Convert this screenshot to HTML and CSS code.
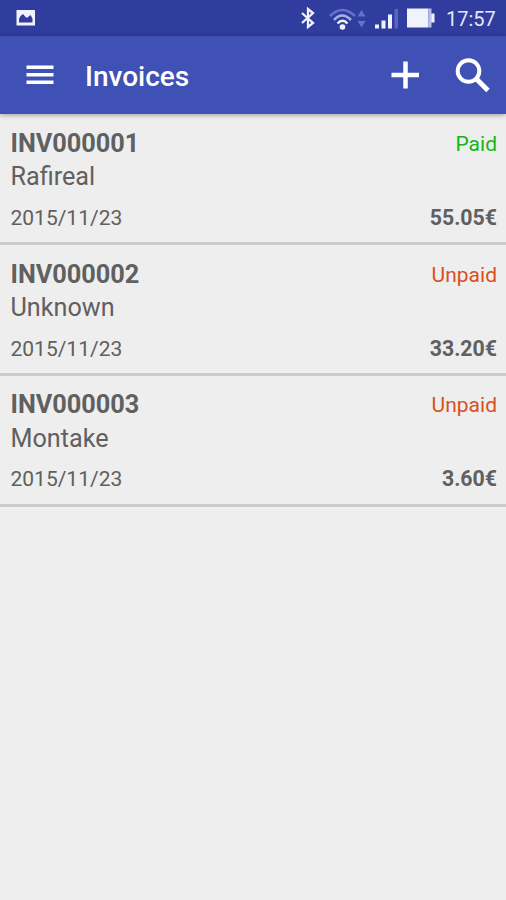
FILE: index.html
```
<!DOCTYPE html>
<html lang="en">
<head>
  <meta charset="UTF-8" />
  <meta name="viewport" content="width=device-width, initial-scale=1.0" />
  <title>Invoices</title>
  <link rel="stylesheet" href="styles.css">
</head>
<body>
  <!-- status bar -->
  <div class="status-bar">
    <svg class="picture-icon" width="20" height="16" viewBox="0 0 20 16">
      <path fill="#f0f2fc" fill-rule="evenodd" d="M.5 0H19v15.500H.5zM3 12.500h13.500V8.500L14.500 5 11.500 7.500H10L7 4 4.500 6 3 9z"/>
    </svg>
    <div class="status-icons">
      <svg width="16" height="22" viewBox="0 0 16 22" fill="none" stroke="#f0f2fc" stroke-width="2.300">
        <path d="M2 6l11 10-5 4V2l5 4L2 16"/>
      </svg>
      <svg class="wifi" width="37" height="23" viewBox="0 0 37 23" fill="none" stroke-width="2.500">
        <path stroke="#6672c9" d="M1 9Q13-3 26 9"/>
        <path stroke="#a9b1e3" d="M5 13Q13 4 22 13"/>
        <path stroke="#f0f2fc" d="M8.500 16.500Q13.500 11 18.500 16.500"/>
        <circle cx="13.500" cy="20" r="2.800" fill="#f0f2fc"/>
        <path fill="#6672c9" d="M28.500 9.500l4-6.500 4 6.500zM28.500 14h8l-4 6.500z"/>
      </svg>
      <svg class="signal" width="24" height="21" viewBox="0 0 24 21" fill="#f0f2fc">
        <path d="M0 16.500h4V20.500H0zM6.500 12.500h4v8h-4zM13 6.500h4v14h-4z"/>
        <path fill="#5865c2" d="M19.500 1H23v19.500h-3.500z"/>
      </svg>
      <svg class="battery" width="28" height="20" viewBox="0 0 28 20">
        <path fill="#f0f2fc" d="M0 .5h21.500V19.500H0zM24 5.500h3.500v9H24z"/>
        <path fill="#b7bde6" d="M21.500.5H24.500v19h-3z"/>
      </svg>
      <span class="clock">17:57</span>
    </div>
  </div>

  <!-- toolbar -->
  <header class="toolbar">
    <svg width="28" height="20" viewBox="0 0 28 20" fill="#fff">
      <path d="M.5.5h27V4H.5zM.5 8h27v3.500H.5zM.5 15.500h27V19H.5z"/>
    </svg>
    <h1>Invoices</h1>
    <svg class="add-icon" width="28" height="28" viewBox="0 0 28 28" stroke="#fff" stroke-width="4.500">
      <path d="M14.500.5v27M.5 14h27.500"/>
    </svg>
    <svg class="search-icon" width="35" height="35" viewBox="0 0 35 35" fill="none" stroke="#fff" stroke-width="4">
      <circle cx="13.500" cy="13" r="10.800"/>
      <path stroke-width="5" d="M21.500 21L33 32.500"/>
    </svg>
  </header>

  <!-- invoice list -->
  <main class="invoices">
    <article class="invoice">
      <div class="line"><h2>INV000001</h2><span class="status paid">Paid</span></div>
      <p class="customer">Rafireal</p>
      <div class="line details"><time>2015/11/23</time><strong>55.05€</strong></div>
    </article>
    <article class="invoice">
      <div class="line"><h2>INV000002</h2><span class="status unpaid">Unpaid</span></div>
      <p class="customer">Unknown</p>
      <div class="line details"><time>2015/11/23</time><strong>33.20€</strong></div>
    </article>
    <article class="invoice">
      <div class="line"><h2>INV000003</h2><span class="status unpaid">Unpaid</span></div>
      <p class="customer">Montake</p>
      <div class="line details"><time>2015/11/23</time><strong>3.60€</strong></div>
    </article>
  </main>
</body>
</html>
```

FILE: styles.css
```
*{box-sizing:border-box;}
body{margin:0;min-height:100vh;background:#eee;color:#606060;
  font-family:Roboto,sans-serif;}
h1,h2,p{margin:0;}
svg{display:block;flex:none;}

/* status bar */
.status-bar{display:flex;align-items:center;justify-content:space-between;
  height:36px;padding:0 10px 0 16px;background:#303d9f;}
.status-icons{display:flex;align-items:center;}
.wifi{margin-left:13px;}
.signal{margin-left:9px;}
.battery{margin-left:8px;}
.clock{width:50px;margin-left:11px;color:#e3e6f8;font-size:20px;line-height:36px;
  padding-top:1px;white-space:nowrap;}

/* toolbar */
.toolbar{display:flex;align-items:center;height:78px;padding:0 16px 0 26px;
  background:#3f51b5;box-shadow:0 1px 5px rgba(0,0,0,.35);}
.toolbar h1{flex:1;margin-left:31px;padding-top:4px;color:#fff;font-size:28px;
  font-weight:500;line-height:36px;}
.search-icon{margin-left:36px;}

/* list */
.invoices{padding-top:.2px;}
.invoice{height:130.900px;padding:13px 9px 0 10.500px;border-bottom:3px solid #cbcbcb;}
.line{display:flex;align-items:center;justify-content:space-between;height:33px;}
.line h2{font-size:25.300px;font-weight:700;line-height:32px;}
.status{font-size:21px;line-height:32px;}
.paid{color:#16b516;}
.unpaid{color:#d9501e;}
.customer{font-size:25.200px;line-height:34px;}
.line.details{height:28px;margin-top:9.500px;font-size:21px;line-height:28px;}
.details strong{font-size:21.300px;}
```
